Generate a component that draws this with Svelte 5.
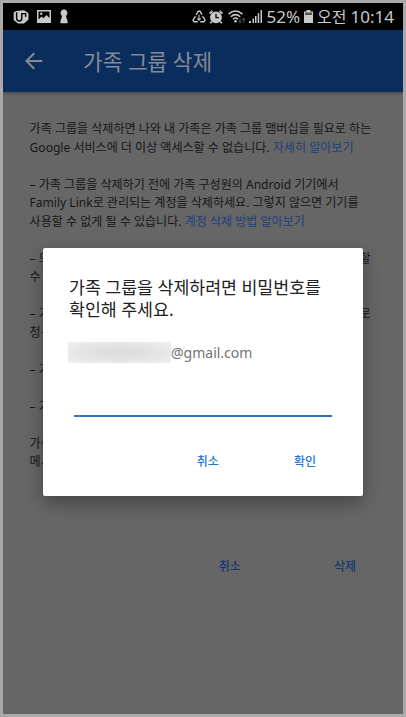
<script lang="ts">
  interface Line {
    text: string;
    link?: string;
    tail?: string;
  }

  const paragraphs: Line[][] = [
    [
      { text: '가족 그룹을 삭제하면 나와 내 가족은 가족 그룹 맴버십을 필요로 하는' },
      { text: 'Google 서비스에 더 이상 액세스할 수 없습니다. ', link: '자세히 알아보기' },
    ],
    [
      { text: '– 가족 그룹을 삭제하기 전에 가족 구성원의 Android 기기에서' },
      { text: 'Family Link로 관리되는 계정을 삭제하세요. 그렇지 않으면 기기를' },
      { text: '사용할 수 없게 될 수 있습니다. ', link: '계정 삭제 방법 알아보기' },
    ],
    [{ text: '– 모든', tail: '할' }, { text: '수 있' }],
    [{ text: '– 가족', tail: '로' }, { text: '청구' }],
    [{ text: '– 가족' }],
    [{ text: '– 가족' }],
    [{ text: '가족' }, { text: '메시' }],
  ];

  let password = $state('');
</script>

<div class="frame">
  <div class="status-bar">
    <div class="status-left">
      <svg class="icon-u" viewBox="0 0 16 14">
        <path d="M3 1 11 .3 15.5 3.2V9.5L11 13.4 5 13.6.7 10V2.5Z" fill="#c9c9c9" />
        <path d="M3.6 2.2V8.2Q3.8 11 6.2 11 8.8 11 8.8 8.2V3.6H12.6V6.8" fill="none" stroke="#000" stroke-width="1.4" />
        <path d="M6.2 2.5V8.5" stroke="#c9c9c9" stroke-width="1.6" />
      </svg>
      <svg class="icon-image" viewBox="0 0 14 13">
        <path d="M0 0H14V13H0ZM1.5 1.5V9.5L4.5 6.5 6.5 8.3 9.5 5 12.5 8V1.5Z" fill="#c9c9c9" fill-rule="evenodd" />
        <circle cx="4.2" cy="3.8" r="1.2" fill="#c9c9c9" />
      </svg>
      <svg class="icon-keyhole" viewBox="0 0 10 15">
        <path d="M5 .3A3.9 3.9 0 0 1 7 7.2L8.6 12.2V14.3H1.4V12.2L3 7.2A3.9 3.9 0 0 1 5 .3Z" fill="#c9c9c9" />
      </svg>
    </div>
    <div class="status-right">
      <svg class="icon-recycle" viewBox="0 0 14 13" fill="none" stroke="#c9c9c9" stroke-width="1.4">
        <path d="M4.1 5 6.2 1.2H8L10 4.7M11.2 7 13 10.2 12 11.8H8.3M5.8 11.8H2L1 10.2 2.8 7" />
        <path d="M7 4.8V10.5M5.2 8.3 7 10.3 8.8 8.3M2 7.2 4.3 6.8M9.8 6.8 12 7.2" stroke-width="1.1" />
      </svg>
      <svg class="icon-alarm" viewBox="0 0 14 14">
        <circle cx="7" cy="7.3" r="5.9" fill="#c9c9c9" />
        <path d="M.5 3.7 3.5.8M10.5.8 13.5 3.7M2.8 11.5 1.2 13.3M11.2 11.5 12.8 13.3" stroke="#c9c9c9" stroke-width="1.7" />
        <path d="M7 3.8V7.7H10" fill="none" stroke="#000" stroke-width="1.3" />
      </svg>
      <svg class="icon-wifi" viewBox="0 0 18 14">
        <g fill="none" stroke="#c9c9c9" stroke-width="1.5">
          <path d="M.6 4.1Q7.5-2 14.4 4.1M2.8 6.7Q7.5 2.5 12.2 6.7M5 9.2Q7.5 6.9 10 9.2" />
        </g>
        <circle cx="7.5" cy="11.2" r="1.3" fill="#c9c9c9" />
        <path d="M12 8V12.5M10.5 11 12 12.8 13.5 11M15.7 13V8.5M14.2 10 15.7 8.2 17.2 10" fill="none" stroke="#444" stroke-width="1.1" />
      </svg>
      <svg class="icon-signal" viewBox="0 0 13 13">
        <path d="M0 11H2V13H0ZM3.5 8.5H5V13H3.5ZM6 6H7.5V13H6ZM8.7 3.2H10.2V13H8.7ZM11.5 0H13V13H11.5Z" fill="#c9c9c9" />
      </svg>
      <span class="percent">52%</span>
      <svg class="icon-battery" viewBox="0 0 9 13">
        <path d="M2.5 0H6.5V1.5H9V13H0V1.5H2.5Z" fill="#c9c9c9" />
        <path d="M1 2.5H8V5H1Z" fill="#555" />
      </svg>
      <span class="meridiem">오전</span>
      <span class="clock">10:14</span>
    </div>
  </div>

  <header class="app-bar">
    <svg class="back" viewBox="0 0 18 18" fill="none" stroke="#858b94" stroke-width="2">
      <path d="M17.3 9H1.7M9.2 1.2 1.5 9 9.2 16.8" />
    </svg>
    <h1>가족 그룹 삭제</h1>
  </header>

  <main class="content">
    {#each paragraphs as lines}
      <div class="paragraph">
        {#each lines as line}
          <div class="line">
            <span>{line.text}{#if line.link}<a href="#help">{line.link}</a>{/if}</span>
            {#if line.tail}<span>{line.tail}</span>{/if}
          </div>
        {/each}
      </div>
    {/each}
  </main>

  <footer class="page-actions">
    <button>취소</button>
    <button>삭제</button>
  </footer>

  <div class="dialog">
    <h2>가족 그룹을 삭제하려면 비밀번호를<br />확인해 주세요.</h2>
    <div class="account">
      <span class="redacted"></span>
      <span>@gmail.com</span>
    </div>
    <input type="password" bind:value={password} />
    <div class="dialog-actions">
      <button>취소</button>
      <button>확인</button>
    </div>
  </div>
</div>

<style>
  :global(body) {
    margin: 0;
  }

  .frame {
    position: relative;
    box-sizing: border-box;
    width: 406px;
    height: 717px;
    border: 3px solid #a9a9a9;
    background: #666;
    color: #161616;
    font-family: 'Noto Sans', 'Noto Sans CJK KR', sans-serif;
    overflow: hidden;
  }

  svg {
    display: block;
    flex: none;
  }

  .status-bar {
    display: flex;
    justify-content: space-between;
    height: 27px;
    padding: 0 9px 0 10px;
    background: #000;
    color: #c9c9c9;
  }

  .status-left,
  .status-right {
    display: flex;
    align-items: center;
  }

  .icon-u {
    width: 16px;
    height: 14px;
  }

  .icon-image {
    width: 14px;
    height: 13px;
    margin-left: 8px;
  }

  .icon-keyhole {
    width: 10px;
    height: 15px;
    margin-left: 8px;
  }

  .icon-recycle {
    width: 14px;
    height: 13px;
  }

  .icon-alarm {
    width: 14px;
    height: 14px;
    margin-left: 3px;
  }

  .icon-wifi {
    width: 18px;
    height: 14px;
    margin-left: 5px;
  }

  .icon-signal {
    width: 13px;
    height: 13px;
    margin-left: 3px;
  }

  .icon-battery {
    width: 9px;
    height: 13px;
    margin-left: 4px;
  }

  .percent,
  .clock {
    font-size: 17px;
    line-height: 28px;
  }

  .percent {
    margin-left: 5px;
  }

  .meridiem {
    margin-left: 4px;
    font-size: 16px;
    line-height: 28px;
  }

  .clock {
    margin-left: 4px;
  }

  .app-bar {
    display: flex;
    align-items: center;
    height: 62px;
    padding-left: 22px;
    box-sizing: border-box;
    background: #0a2d5e;
    box-shadow: 0 1px 3px rgba(0, 0, 0, 0.35);
  }

  .back {
    width: 18px;
    height: 18px;
  }

  h1 {
    margin: 2px 0 0 40px;
    color: #858b94;
    font-size: 21.4px;
    font-weight: 400;
    line-height: 30px;
  }

  .content {
    display: flex;
    flex-direction: column;
    gap: 18.5px;
    box-sizing: border-box;
    width: 342px;
    height: 442px;
    margin-left: 26.6px;
    padding-top: 28px;
    font-size: 12.05px;
    line-height: 18.5px;
  }

  .line {
    display: flex;
    justify-content: space-between;
    width: 341px;
    white-space: pre;
  }

  a {
    color: #203f7c;
    text-decoration: none;
  }

  button {
    padding: 0;
    border: 0;
    background: none;
    color: #15386f;
    font-family: inherit;
    font-size: 12px;
    font-weight: 500;
    line-height: 20px;
  }

  .page-actions {
    display: flex;
    justify-content: flex-end;
    gap: 93px;
    margin-top: 23px;
    padding-right: 47px;
  }

  .dialog {
    position: absolute;
    top: 245px;
    left: 40px;
    box-sizing: border-box;
    width: 320px;
    height: 248px;
    padding: 29px 26px 0;
    border-radius: 2px;
    background: #fff;
    box-shadow: 0 7px 18px rgba(0, 0, 0, 0.32);
  }

  h2 {
    margin: 0;
    color: #212121;
    font-size: 17.3px;
    font-weight: 400;
    line-height: 22px;
    white-space: nowrap;
  }

  .account {
    display: flex;
    align-items: center;
    height: 22px;
    margin-top: 20px;
    color: #737373;
    font-size: 14px;
  }

  .redacted {
    width: 103px;
    height: 21px;
    margin-left: -1px;
    background: radial-gradient(ellipse, #dedede 20%, #e5e5e5 55%, #f0f0f0 100%);
  }

  input {
    display: block;
    box-sizing: border-box;
    width: 258px;
    height: 30px;
    margin: 24px 0 0 5px;
    padding: 0;
    border: 0;
    border-bottom: 2px solid #2b75c0;
    outline: none;
    background: none;
  }

  .dialog-actions {
    display: flex;
    justify-content: flex-end;
    gap: 75px;
    margin-top: 35px;
    padding-right: 21px;
  }

  .dialog-actions button {
    color: #2578d0;
  }
</style>
